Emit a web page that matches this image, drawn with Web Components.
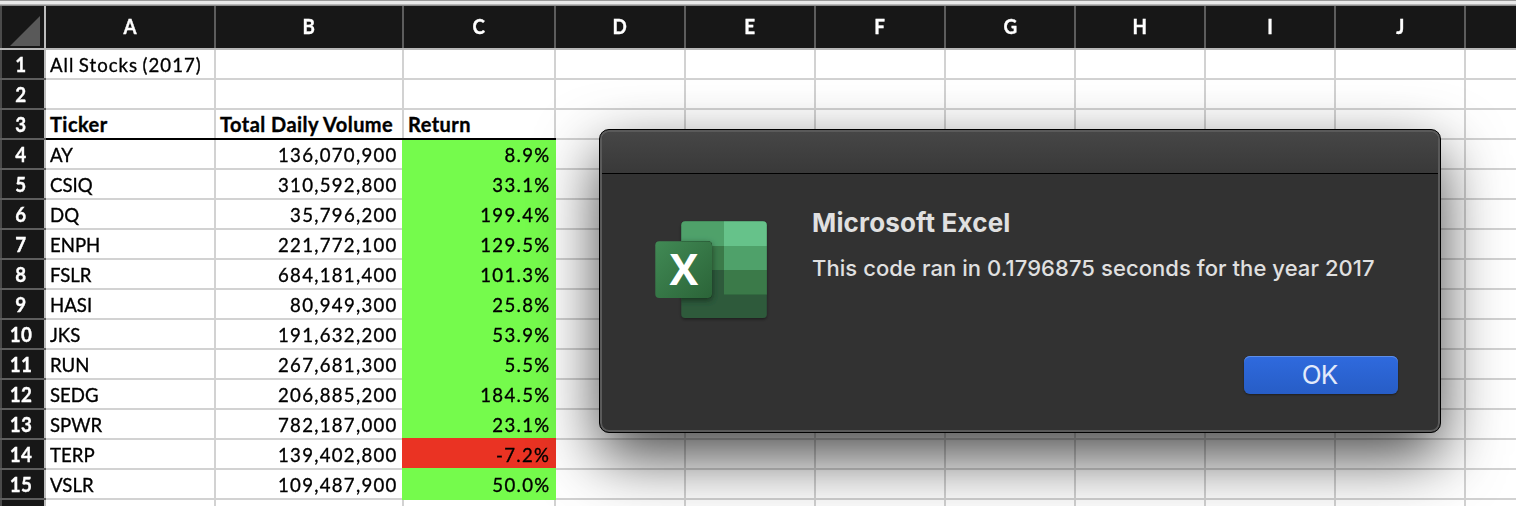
<!DOCTYPE html>
<html lang="en"><head><meta charset="utf-8"><title>All Stocks (2017)</title>
<style>html,body{margin:0;height:100%;overflow:hidden;background:#fff}</style></head>
<body>
<excel-window></excel-window>
<script>
class SheetHead extends HTMLElement{
  connectedCallback(){
    this.attachShadow({mode:'open'}).innerHTML=`<style>
    :host{--r:#5c5c5c;--b:#b8b8b8;--l:#171717;display:flex;align-items:center;justify-content:center;box-sizing:border-box;color:#fff;font:bold 20px/1 Lato,sans-serif;
      background:linear-gradient(var(--b),var(--b)) bottom/100% 2px no-repeat,linear-gradient(var(--r),var(--r)) right/2px 100% no-repeat,linear-gradient(var(--l),var(--l)) left/2px 100% no-repeat,#171717}
    span{display:block;transform:scaleX(.94);-webkit-text-stroke:.35px #fff}
    :host([kind=col]){padding:0 2px 4px 0}
    :host([kind=row]){--l:#4b4b4b;--b:#5e5e5e;--r:#bcbcbc;padding:0 3px 2px 0;letter-spacing:.5px}
    :host([kind=corner]){--l:#4b4b4b;--r:#bcbcbc;justify-content:flex-end;align-items:flex-end;padding:0 6px 4px 0}
    :host([kind=corner]) span{transform:none}
    ::slotted(svg){display:block}
    </style><span><slot></slot></span>`;
  }
}
customElements.define('sheet-head',SheetHead);

class SheetCell extends HTMLElement{
  connectedCallback(){
    this.attachShadow({mode:'open'}).innerHTML=`<style>
    :host{--r:#d2d2d2;--b:#d2d2d2;--bg:#fff;display:flex;align-items:center;box-sizing:border-box;padding:0 6px 2px 4px;color:#000;font:20px/1 Lato,sans-serif;white-space:pre;
      background:linear-gradient(var(--b),var(--b)) bottom/100% 2px no-repeat,linear-gradient(var(--r),var(--r)) right/2px 100% no-repeat,var(--bg)}
    span{display:block;transform:scaleX(.93);transform-origin:0 50%;-webkit-text-stroke:.35px #000}
    :host([long]){letter-spacing:1.1px;word-spacing:-1.5px}
    :host([bold]){font-weight:bold;--b:#000;letter-spacing:.45px}
    :host([bold]) span{transform:none}
    :host([num]){justify-content:flex-end;letter-spacing:1.38px}
    :host([num]) span{transform-origin:100% 50%}
    :host([fill]){margin-left:-2px;--bg:var(--fill);--r:var(--fill);--b:var(--fill)}
    :host([fill=green]){--fill:#75fb4c}
    :host([fill=red]){--fill:#ea3323;--b:#75fb4c}
    :host([lift]){--b:#ea3323}
    </style><span><slot></slot></span>`;
  }
}
customElements.define('sheet-cell',SheetCell);

class ExcelSheet extends HTMLElement{
  connectedCallback(){
    const data=[['AY','136,070,900','8.9%'],['CSIQ','310,592,800','33.1%'],['DQ','35,796,200','199.4%'],['ENPH','221,772,100','129.5%'],['FSLR','684,181,400','101.3%'],['HASI','80,949,300','25.8%'],['JKS','191,632,200','53.9%'],['RUN','267,681,300','5.5%'],['SEDG','206,885,200','184.5%'],['SPWR','782,187,000','23.1%'],['TERP','139,402,800','-7.2%'],['VSLR','109,487,900','50.0%']];
    const blanks=n=>'<sheet-cell></sheet-cell>'.repeat(n);
    let h='<sheet-head kind="corner"><svg width="30" height="30" viewBox="0 0 30 30"><path d="M0 30L30 0V30Z" fill="#595959"/></svg></sheet-head>';
    for(const c of ['A','B','C','D','E','F','G','H','I','J','']) h+=`<sheet-head kind="col">${c}</sheet-head>`;
    for(let r=1;r<=16;r++){
      h+=`<sheet-head kind="row">${r<16?r:''}</sheet-head>`;
      if(r===1) h+='<sheet-cell long>All Stocks (2017)</sheet-cell>'+blanks(10);
      else if(r===3) h+='<sheet-cell bold>Ticker</sheet-cell><sheet-cell bold>Total Daily Volume</sheet-cell><sheet-cell bold>Return</sheet-cell>'+blanks(8);
      else if(r>3&&r<16){
        const [t,v,p]=data[r-4];
        h+=`<sheet-cell>${t}</sheet-cell><sheet-cell num>${v}</sheet-cell><sheet-cell num fill="${p[0]==='-'?'red':'green'}"${r===13?' lift':''}>${p}</sheet-cell>`+blanks(8);
      } else h+=blanks(11);
    }
    this.attachShadow({mode:'open'}).innerHTML=`<style>
    :host{display:grid;grid-template-columns:46px 170px 188px 152px repeat(7,130px) 52px;grid-template-rows:44px repeat(16,30px)}
    </style>${h}`;
  }
}
customElements.define('excel-sheet',ExcelSheet);

class ExcelLogo extends HTMLElement{
  connectedCallback(){
    this.attachShadow({mode:'open'}).innerHTML=`<style>:host{display:block}svg{display:block;overflow:visible}</style>
    <svg width="112" height="98" viewBox="0 0 112 98">
    <defs><clipPath id="b"><rect x="26.3" y="0.3" width="85.500" height="96.700" rx="4"/></clipPath>
    <linearGradient id="g" x1="0" y1="0" x2="1" y2="1"><stop stop-color="#418a55"/><stop offset="1" stop-color="#2b6438"/></linearGradient>
    <filter id="s" x="-30%" y="-30%" width="160%" height="170%"><feDropShadow dx="0" dy="2" stdDeviation="3" flood-opacity=".5"/></filter>
    <filter id="t" x="-20%" y="-20%" width="140%" height="140%"><feDropShadow dx="0" dy="1.5" stdDeviation="1.5" flood-opacity=".4"/></filter></defs>
    <g filter="url(#t)"><g clip-path="url(#b)"><path fill="#2d5a3b" d="M26 0h86v98H26z"/><path fill="#4fa16b" d="M26 0h43v25H26zM69 25h43v24H69z"/><path fill="#66c28a" d="M69 0h43v25H69z"/><path fill="#3a7a49" d="M26 25h43v24H26zM69 49h43v24.500H69z"/><g filter="url(#s)"><rect x="0.300" y="20.300" width="56.700" height="56.700" rx="4"/></g></g></g>
    <rect x="0.300" y="20.300" width="56.700" height="56.700" rx="4" fill="url(#g)"/>
    <text x="28.900" y="64" text-anchor="middle" fill="#fff" font-family="Open Sans,sans-serif" font-weight="700" font-size="43">X</text>
    </svg>`;
  }
}
customElements.define('excel-logo',ExcelLogo);

class PushButton extends HTMLElement{
  connectedCallback(){
    this.attachShadow({mode:'open'}).innerHTML=`<style>
    :host{display:flex;align-items:center;justify-content:center;box-sizing:border-box;width:154px;height:38px;border-radius:6px;background:linear-gradient(#2f6ade,#275dc6);box-shadow:inset 0 1px #5d8ee8,0 1px 2px rgba(0,0,0,.4);color:#e3eafa;font:26px/1 Inter,sans-serif;letter-spacing:-.8px;padding-right:3px}
    </style><slot></slot>`;
  }
}
customElements.define('push-button',PushButton);

class AlertDialog extends HTMLElement{
  connectedCallback(){
    this.attachShadow({mode:'open'}).innerHTML=`<style>
    :host{display:flex;flex-direction:column;box-sizing:border-box;width:842px;height:304px;border:1px solid #000;border-radius:10px;background:#323232;box-shadow:inset 0 0 0 2px #5a5a5a,inset 0 2px #777,0 24px 62px rgba(0,0,0,.72);color:#e0e0e0;font-family:Inter,sans-serif}
    .bar{height:41px;margin:2px 2px 0;border-bottom:1px solid #000;background:linear-gradient(#464646,#393939);border-radius:7px 7px 0 0}
    .body{display:grid;grid-template-columns:112px 1fr;column-gap:45px;padding:47px 40px 0 55px;flex:1}
    .text{display:flex;flex-direction:column;margin-top:-14px}
    h1{margin:0;font:700 26px/32px Inter,sans-serif;letter-spacing:.16px;white-space:nowrap}
    p{margin:14px 0 0;font:450 22px/30px Inter,sans-serif;white-space:nowrap;letter-spacing:.07px}
    footer{display:flex;justify-content:flex-end;padding:0 42px 38px}
    </style><div class="bar"></div><div class="body"><excel-logo></excel-logo><div class="text"><h1><slot name="title"></slot></h1><p><slot name="message"></slot></p></div></div><footer><push-button><slot name="action"></slot></push-button></footer>`;
  }
}
customElements.define('alert-dialog',AlertDialog);

class ExcelWindow extends HTMLElement{
  connectedCallback(){
    this.attachShadow({mode:'open'}).innerHTML=`<style>
    :host{display:block;position:relative;width:1516px;height:506px;overflow:hidden}
    .edge{height:6px;background:linear-gradient(#999 0 1px,#e9e9e9 1px 4px,#b5b5b5 4px 5px,#8c8c8c 5px)}
    alert-dialog{position:absolute;left:599px;top:129px}
    </style><div class="edge"></div><excel-sheet></excel-sheet>
    <alert-dialog><span slot="title">Microsoft Excel</span><span slot="message">This code ran in 0.1796875 seconds for the year 2017</span><span slot="action">OK</span></alert-dialog>`;
  }
}
customElements.define('excel-window',ExcelWindow);
</script>
</body></html>
